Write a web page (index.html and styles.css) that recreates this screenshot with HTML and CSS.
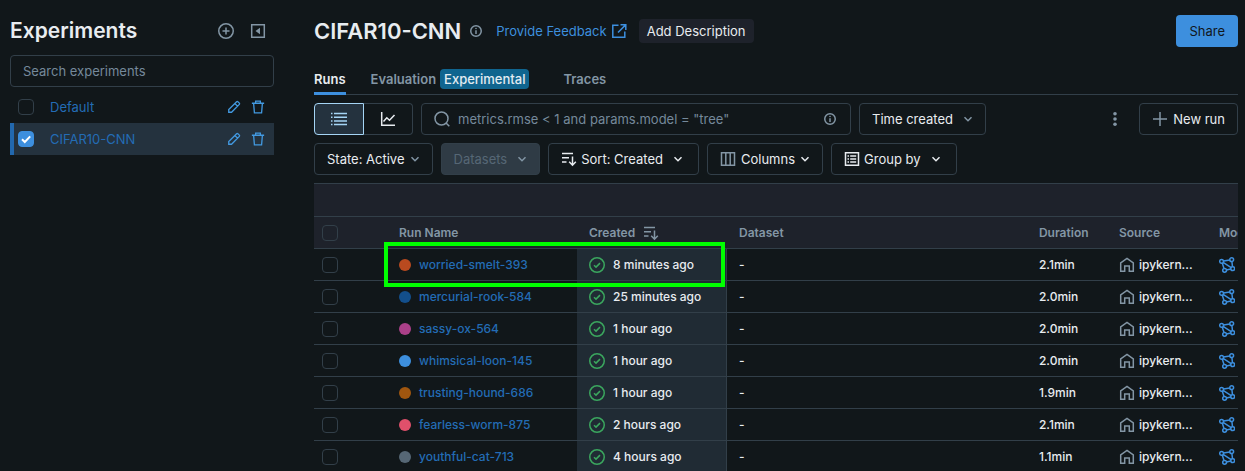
FILE: index.html
```html
<!DOCTYPE html>
<html lang="en">
<head>
<meta charset="utf-8">
<title>Experiments</title>
<link rel="stylesheet" href="styles.css">
</head>
<body>
<svg class="sprite" aria-hidden="true">
  <symbol id="i-info" viewBox="0 0 16 16"><circle cx="8" cy="8" r="7"/><path d="M8 7v5"/><circle class="solid" cx="8" cy="4.600" r="1.100"/></symbol>
  <symbol id="i-pencil" viewBox="0 0 16 16"><path d="M2 14v-3.2L11 1.900a1 1 0 0 1 1.400 0l1.700 1.700a1 1 0 0 1 0 1.400L5.200 14zM9 4l3 3"/></symbol>
  <symbol id="i-trash" viewBox="0 0 16 16"><path d="M1 3.700h14M5.300 3.500V1.200h5.400v2.300M3 3.800l.9 11h8.200l.9-11"/></symbol>
  <symbol id="i-chevron" viewBox="0 0 10 10"><path d="M1.500 3.200L5 6.700l3.500-3.500"/></symbol>
  <symbol id="i-sort" viewBox="0 0 16 16"><path d="M1 2.500h11M1 6.800h7M1 11h4.500M11.500 5.500v8.500M8.200 10.800l3.300 3.400 3.300-3.400"/></symbol>
  <symbol id="i-ok" viewBox="0 0 16 16"><circle cx="8" cy="8" r="7.250"/><path d="M5 8.200l2 1.900 4-4"/></symbol>
  <symbol id="i-home" viewBox="0 0 16 16"><path d="M1.700 14.300V6L8 1.500 14.300 6v8.300h-4V9H5.700v5.300z"/></symbol>
  <symbol id="i-model" viewBox="0 0 16 16"><circle cx="2.600" cy="4.400" r="1.900"/><circle cx="12.700" cy="2.700" r="1.900"/><circle cx="5.600" cy="13.300" r="1.900"/><circle cx="13.700" cy="11.700" r="1.900"/><path d="M4.400 4.100l6.500-1.100M3.200 6.100l1.800 5.500M4.100 5.400l8.100 5.300M12.900 4.500l.6 5.400M7.400 13l4.500-.9"/></symbol>
</svg>
<div class="app">
  <aside class="sidebar">
    <div class="sidebar-head">
      <h1 class="title">Experiments</h1>
      <button class="icon-btn" aria-label="New experiment"><svg class="ic" viewBox="0 0 16 16"><circle cx="8" cy="8" r="7.250"/><path d="M8 4.500v7M4.500 8h7"/></svg></button>
      <button class="icon-btn" aria-label="Collapse sidebar"><svg class="ic" viewBox="0 0 16 16"><path d="M1.700 1.700h12.600v12.600H1.700z"/><path class="solid" d="M10 4.800v6.400L5.500 8z"/></svg></button>
    </div>
    <input class="search-exp" type="text" placeholder="Search experiments" aria-label="Search experiments">
    <ul class="exp-list">
      <li class="exp">
        <input class="check" type="checkbox" id="exp-0" aria-label="Select Default">
        <a class="link exp-name" href="#">Default</a>
        <button class="icon-btn act" aria-label="Rename"><svg class="ic s14"><use href="#i-pencil"/></svg></button>
        <button class="icon-btn act" aria-label="Delete"><svg class="ic s14"><use href="#i-trash"/></svg></button>
      </li>
      <li class="exp selected">
        <input class="check" type="checkbox" id="exp-1" aria-label="Select CIFAR10-CNN" checked>
        <a class="link exp-name" href="#">CIFAR10-CNN</a>
        <button class="icon-btn act" aria-label="Rename"><svg class="ic s14"><use href="#i-pencil"/></svg></button>
        <button class="icon-btn act" aria-label="Delete"><svg class="ic s14"><use href="#i-trash"/></svg></button>
      </li>
    </ul>
  </aside>
  <main class="main">
    <header class="head">
      <h2 class="title">CIFAR10-CNN</h2>
      <svg class="ic s12 info"><use href="#i-info"/></svg>
      <a class="feedback" href="#">Provide Feedback <svg class="ic" viewBox="0 0 16 16"><path d="M7.500 2.200H1.800v12h12V8.500M9.500 1.700h5.300V7M14.600 1.900L7 9.500"/></svg></a>
      <button class="desc-btn">Add Description</button>
      <button class="share">Share</button>
    </header>
    <nav class="tabs">
      <a class="tab active" href="#">Runs</a>
      <a class="tab" href="#">Evaluation <span class="tag">Experimental</span></a>
      <a class="tab" href="#">Traces</a>
    </nav>
    <div class="bar">
      <div class="segment">
        <button class="seg on" aria-label="Table view"><svg class="ic" viewBox="0 0 16 16"><path d="M3 2.500h13M3 6.200h13M3 9.900h13M3 13.500h13M0 2.500h1.500M0 6.200h1.500M0 9.900h1.500M0 13.500h1.500"/></svg></button>
        <button class="seg" aria-label="Chart view"><svg class="ic" viewBox="0 0 16 16"><path d="M1.700 1v13.300H15M3.500 10.500l3.300-3.700 2.700 2.500L14.500 4"/></svg></button>
      </div>
      <label class="query">
        <svg class="ic" viewBox="0 0 16 16"><circle cx="7.500" cy="7.500" r="6.500"/><path d="M12 12l3.300 3.300"/></svg>
        <input type="text" aria-label="Search runs" placeholder='metrics.rmse &lt; 1 and params.model = "tree"'>
        <svg class="ic s12"><use href="#i-info"/></svg>
      </label>
      <label class="btn select"><select aria-label="Time"><option>Time created</option></select><svg class="ic s10"><use href="#i-chevron"/></svg></label>
      <button class="icon-btn kebab" aria-label="More"><svg class="ic" viewBox="0 0 16 16"><circle class="solid" cx="8" cy="2.700" r="1.800"/><circle class="solid" cx="8" cy="8" r="1.800"/><circle class="solid" cx="8" cy="13.300" r="1.800"/></svg></button>
      <button class="btn new"><svg class="ic" viewBox="0 0 16 16"><path d="M8 1v14M1 8h14"/></svg>New run</button>
    </div>
    <div class="bar">
      <button class="btn">State: Active<svg class="ic s10"><use href="#i-chevron"/></svg></button>
      <button class="btn wide" disabled>Datasets<svg class="ic s10"><use href="#i-chevron"/></svg></button>
      <button class="btn wide light"><svg class="ic"><use href="#i-sort"/></svg>Sort: Created<svg class="ic s10 end"><use href="#i-chevron"/></svg></button>
      <button class="btn light-end"><svg class="ic" viewBox="0 0 16 16"><path d="M1.500 1.700h13v12.600h-13zM5.800 1.700v12.600M10.200 1.700v12.600"/></svg>Columns<svg class="ic s10"><use href="#i-chevron"/></svg></button>
      <button class="btn wide light"><svg class="ic" viewBox="0 0 16 16"><path d="M1.500 1.700h13v12.600h-13zM6.200 5h6M6.200 8h6M6.200 11h6M3.500 5H5M3.500 8H5M3.500 11H5"/></svg>Group by<svg class="ic s10 end"><use href="#i-chevron"/></svg></button>
    </div>
    <div class="grid">
      <table class="runs">
        <colgroup><col class="c-check"><col class="c-name"><col class="c-created"><col><col class="c-dur"><col class="c-src"><col class="c-model"></colgroup>
        <thead>
          <tr class="group"><th colspan="7"></th></tr>
          <tr><th class="first"><input class="check" type="checkbox" aria-label="Select all"></th><th>Run Name</th><th><span class="cell">Created<svg class="ic"><use href="#i-sort"/></svg></span></th><th>Dataset</th><th>Duration</th><th>Source</th><th>Models</th></tr>
        </thead>
        <tbody id="rows"></tbody>
      </table>
      <div class="highlight"></div>
    </div>
  </main>
</div>
<script src="runs.js"></script>
</body>
</html>
```

FILE: styles.css
```css
* { box-sizing: border-box; }
body {
  margin: 0;
  background: #11171a;
  color: #e8ecf0;
  font: 13px/20px Inter, "Liberation Sans", sans-serif;
}
button, input, select { font: inherit; color: inherit; margin: 0; }
button { cursor: pointer; }
a { text-decoration: none; }
.sprite { display: none; }
.ic {
  width: 16px; height: 16px; flex: none;
  fill: none; stroke: currentColor; stroke-width: 1.500;
}
.ic .solid, .solid { fill: currentColor; stroke: none; }
.s14 { width: 14px; height: 14px; }
.s12 { width: 12px; height: 12px; stroke-width: 2; }
.s10 { width: 10px; height: 10px; }

.app { display: flex; gap: 40px; height: 100vh; overflow: hidden; padding: 15px 7px 0 10px; }
.title { margin: 0; font-size: 22px; line-height: 32px; font-weight: 600; }

.sidebar { flex: none; width: 264px; }
.sidebar-head { display: flex; align-items: center; gap: 16px; padding-right: 8px; margin-bottom: 8px; }
.sidebar-head .title { flex: 1; font-size: 21px; }
.icon-btn { display: flex; padding: 0; border: 0; background: none; color: #8396a5; }
.search-exp {
  display: block; width: 100%; height: 32px; padding: 0 12px;
  border: 1px solid #323f49; border-radius: 4px; background: none;
}
::placeholder { color: #75899a; opacity: 1; }
.exp-list { list-style: none; margin: 4px 0 0; padding: 0; }
.exp { display: flex; align-items: center; gap: 10px; height: 32px; padding: 0 9px 0 8px; }
.exp.selected { background: #24323e; border-left: 4px solid #2268ae; padding-left: 4px; }
.exp-name { flex: 1; padding-left: 6px; }
.act { color: #4299e0; }
.link { color: #236cb5; }
.check {
  appearance: none; display: block; flex: none; width: 16px; height: 16px;
  border: 1px solid #323f49; border-radius: 4px;
}
.check:checked {
  border-color: #3d8fde;
  background: #3d8fde url("data:image/svg+xml,%3Csvg xmlns='http://www.w3.org/2000/svg' viewBox='0 0 14 14'%3E%3Cpath d='M3 7.200l2.800 2.800L11.200 4.400' fill='none' stroke='white' stroke-width='2'/%3E%3C/svg%3E");
}

.main { flex: 1; min-width: 0; }
.head { display: flex; align-items: center; height: 32px; }
.info { margin: 0 14px 0 9px; color: #8396a5; }
.feedback { display: flex; align-items: center; gap: 4px; color: #3d8fde; }
.desc-btn { height: 24px; margin-left: 12px; padding: 0 8px; border: 0; border-radius: 4px; background: #1e222b; }
.share { height: 32px; margin-left: auto; padding: 0 13px; border: 0; border-radius: 4px; background: #3d8fde; color: #11171c; }

.tabs { display: flex; gap: 25px; height: 32px; margin: 16px 0 8px; border-bottom: 1px solid #323f49; }
.tab { display: flex; align-items: center; gap: 4px; height: 32px; color: #8396a5; font-weight: 600; }
.tab.active { color: #e8ecf0; border-bottom: 3px solid #3d8fde; padding-top: 3px; }
.tag { padding: 0 4px; border-radius: 4px; background: #10658f; color: #e3ecf2; font-weight: 500; }
.tab:last-child { margin-left: 9px; }

.bar { display: flex; align-items: center; gap: 8px; margin-bottom: 8px; }
.segment { display: flex; }
.seg {
  display: grid; place-items: center; width: 49px; height: 32px; padding: 0;
  border: 1px solid #323f49; border-left: 0; border-radius: 0 4px 4px 0; background: none;
}
.seg.on { width: 50px; border: 1px solid #a5d5f5; border-radius: 4px 0 0 4px; background: #24323e; color: #a5d5f5; }
.query {
  display: flex; align-items: center; gap: 8px; flex: 0 1 430px; height: 32px; padding: 0 14px 0 12px;
  border: 1px solid #323f49; border-radius: 4px; color: #8396a5;
}
.query input { flex: 1; min-width: 0; padding: 0; border: 0; background: none; }
.btn {
  display: flex; align-items: center; gap: 5px; height: 32px; padding: 0 12px;
  border: 1px solid #323f49; border-radius: 4px; background: none; white-space: nowrap;
}
.btn .ic { color: #8396a5; }
.btn.wide { gap: 10px; }
.btn.light { gap: 4px; padding-right: 15px; }
.btn.light .ic, .btn.light-end .ic:last-child { color: #e8ecf0; }
.btn .end { margin-left: 6px; }
.btn:disabled { background: #2f3b45; color: #566775; }
.select { gap: 10px; }
.select select { appearance: none; padding: 0; border: 0; background: none; }
.kebab { margin-left: auto; }
.new { margin-left: 8px; }

.grid { position: relative; overflow: hidden; border-top: 1px solid #323f49; }
.runs {
  width: calc(100% + 89px); table-layout: fixed; border-collapse: separate; border-spacing: 0;
  font-size: 12px; font-weight: 500;
}
.c-check { width: 73px; }
.c-name { width: 190px; }
.c-created { width: 150px; }
.c-dur { width: 80px; }
.c-src { width: 100px; }
.c-model { width: 120px; }
.runs th, .runs td { height: 32px; padding: 0 12px; border-bottom: 1px solid #323f49; text-align: left; white-space: nowrap; }
.runs th { background: #1e222b; color: #8396a5; font-weight: 600; }
.runs .group th { height: 33px; }
.runs .first { padding-left: 8px; }
.runs .created { background: #202b34; border-right: 1px solid #323f49; }
.cell { display: flex; align-items: center; gap: 8px; }
.cell > .ic { color: #8396a5; }
.cell > .ok { color: #3ba65e; }
.cell.src { gap: 4px; }
.model { display: block; color: #3d8fde; }
.dot { width: 12px; height: 12px; border-radius: 50%; }
.highlight {
  position: absolute; left: 70px; top: 58px; width: 341px; height: 45px;
  border: 4px solid #00ff00; pointer-events: none;
}
```

FILE: runs.js
```js
const runs = [
  ["worried-smelt-393", "#b94a1f", "8 minutes ago", "2.1min"],
  ["mercurial-rook-584", "#134f8c", "25 minutes ago", "2.0min"],
  ["sassy-ox-564", "#ab4089", "1 hour ago", "2.0min"],
  ["whimsical-loon-145", "#3d8fde", "1 hour ago", "2.0min"],
  ["trusting-hound-686", "#a0560f", "1 hour ago", "1.9min"],
  ["fearless-worm-875", "#e0506b", "2 hours ago", "2.1min"],
  ["youthful-cat-713", "#566775", "4 hours ago", "1.1min"]
];
document.getElementById("rows").innerHTML = runs.map(([name, color, created, duration]) => `
  <tr>
    <td class="first"><input class="check" type="checkbox" aria-label="Select ${name}"></td>
    <td><span class="cell"><span class="dot" style="background:${color}"></span><a class="link" href="#">${name}</a></span></td>
    <td class="created"><span class="cell"><svg class="ic ok"><use href="#i-ok"/></svg>${created}</span></td>
    <td>-</td>
    <td>${duration}</td>
    <td><span class="cell src"><svg class="ic"><use href="#i-home"/></svg>ipykern...</span></td>
    <td><svg class="ic model"><use href="#i-model"/></svg></td>
  </tr>`).join("");
```
